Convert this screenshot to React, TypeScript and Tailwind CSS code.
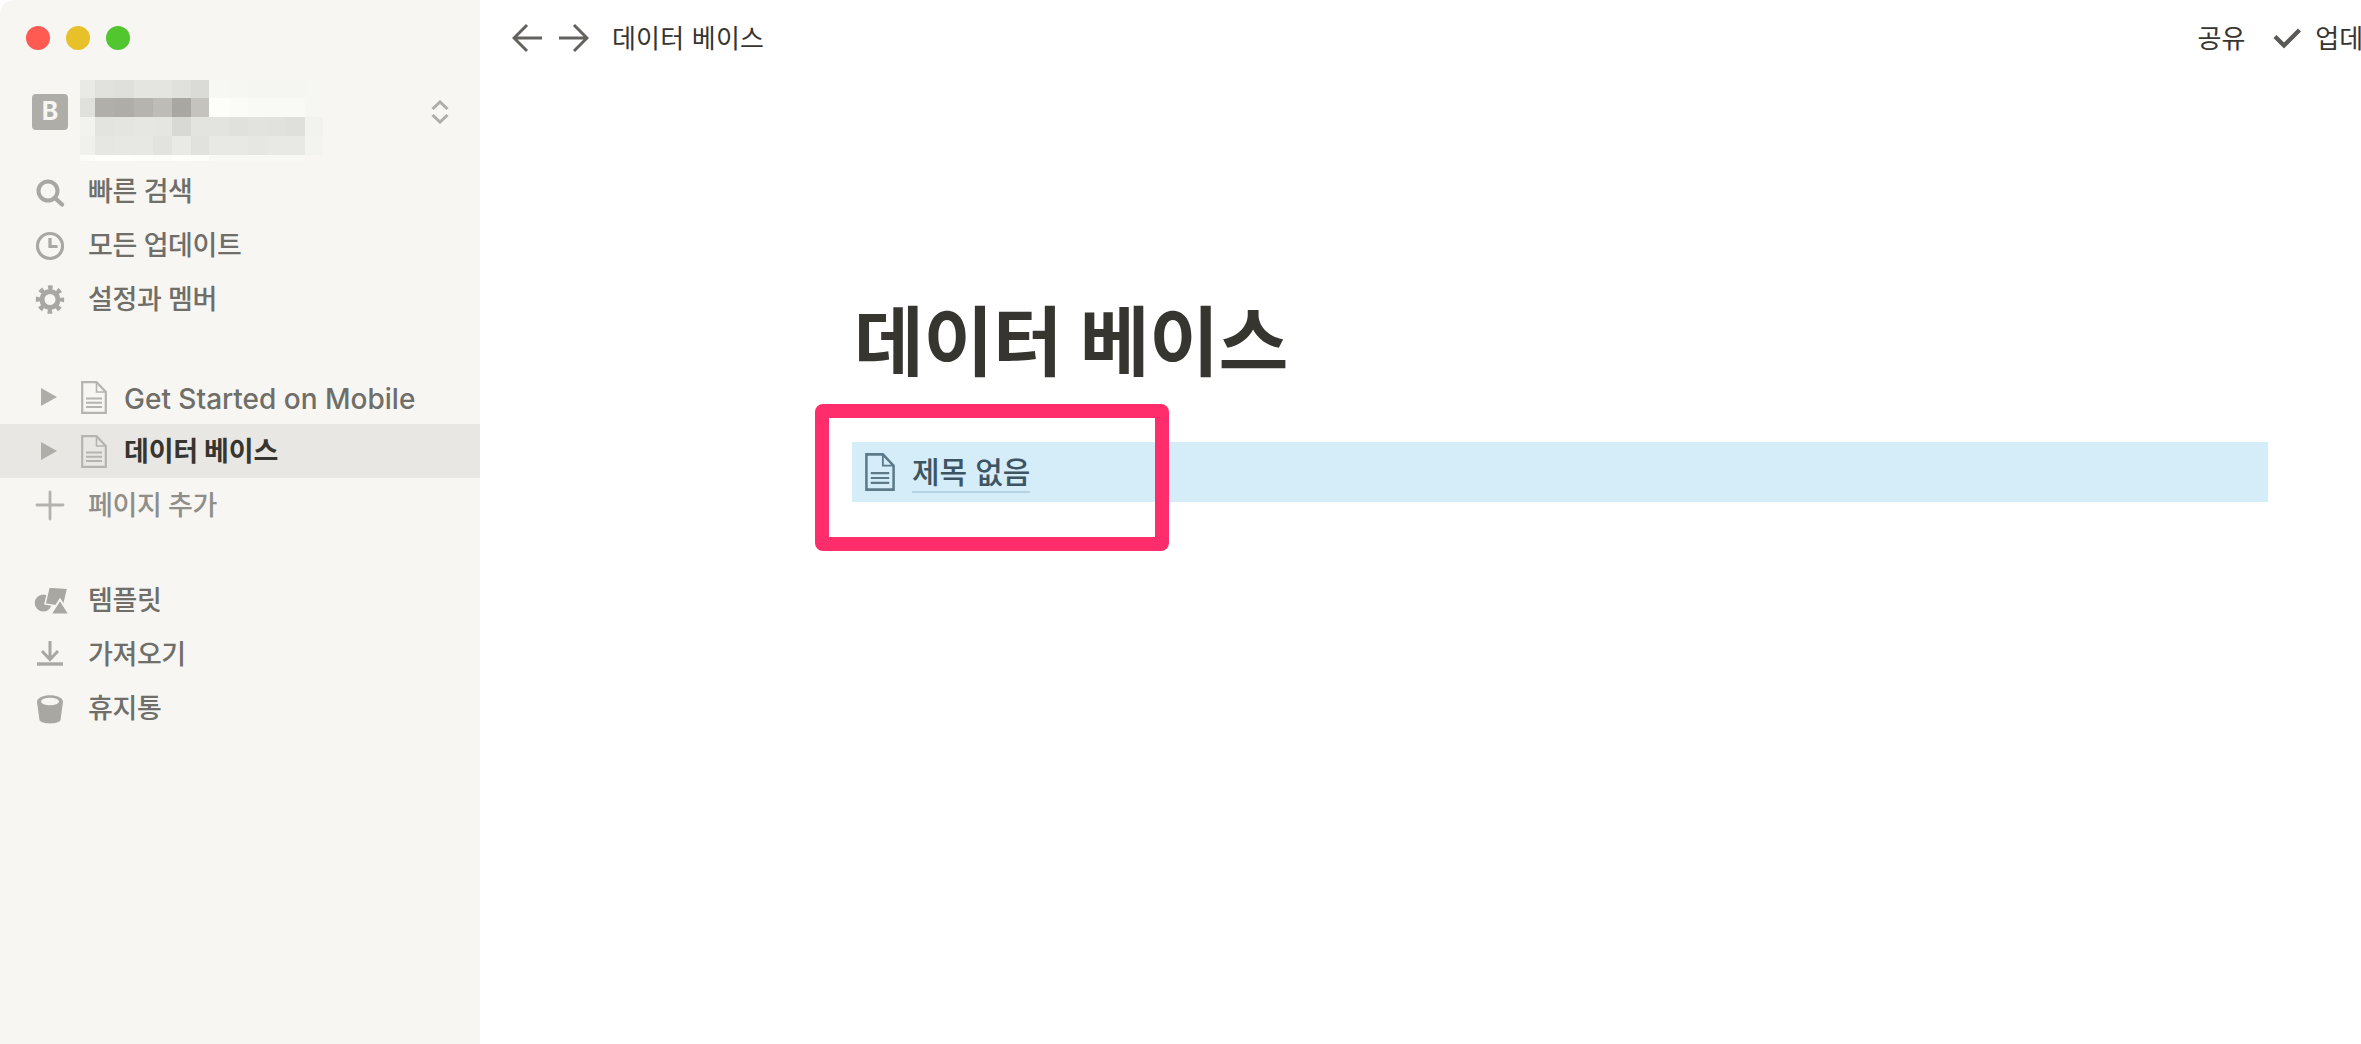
import React from 'react'

const mosaic: { y: number; h: number; cells: string[] }[] = [
  { y: 0, h: 18, cells: ['#e9e9e6', '#e1e1de', '#dfdfdb', '#e4e4e1', '#e4e4e1', '#e0e0dd', '#dadad6', '#f7f7f4', '#f6f6f3', '#f5f5f2', '#f5f5f2', '#f5f5f2', '#f6f6f3', '#f7f6f3'] },
  { y: 18, h: 19, cells: ['#e0e0dc', '#b0afaa', '#aeada8', '#b5b4af', '#bdbcb7', '#a8a7a2', '#c4c3be', '#fdfdf9', '#fbfbf8', '#f9f9f6', '#f9f9f6', '#f9f9f6', '#f6f6f3', '#f7f6f3'] },
  { y: 37, h: 19, cells: ['#f2f2ef', '#e3e3e0', '#e4e4e1', '#e6e6e3', '#e5e5e2', '#d8d8d4', '#e3e3e0', '#e3e3e0', '#e0e0dd', '#e2e2df', '#e1e1de', '#dfdfdb', '#f2f2ef', '#f7f6f3'] },
  { y: 56, h: 19, cells: ['#f0f0ed', '#e6e6e3', '#e7e7e4', '#e7e7e4', '#e2e2df', '#e9e9e6', '#e1e1de', '#e8e8e5', '#e8e8e5', '#e6e6e3', '#e8e8e5', '#e8e8e5', '#f3f3f0', '#f7f6f3'] },
  { y: 75, h: 6, cells: ['#fbfbf8', '#fefefb', '#fefefb', '#fdfdfa', '#fcfcf9', '#fefefb', '#fdfdfa', '#f8f8f5', '#f8f8f5', '#f8f8f5', '#f8f8f5', '#f8f8f5', '#f7f6f3', '#f7f6f3'] },
]
const mosaicX = [0, 15, 34, 54, 73, 92, 111, 129, 149, 168, 187, 206, 225, 243, 258]

const Mosaic = () => (
  <svg width="258" height="81" viewBox="0 0 258 81" className="block shrink-0">
    {mosaic.map((row) =>
      row.cells.map((c, i) => (
        <rect key={`${row.y}-${i}`} x={mosaicX[i]} y={row.y} width={mosaicX[i + 1] - mosaicX[i]} height={row.h} fill={c} />
      )),
    )}
  </svg>
)

const SearchIcon = () => (
  <svg width="36" height="36" viewBox="0 0 36 36" fill="none" stroke="#a8a7a2">
    <circle cx="16" cy="18" r="9.5" strokeWidth="4" />
    <path d="M23 25l7 6.5" strokeWidth="4.4" strokeLinecap="round" />
  </svg>
)

const ClockIcon = () => (
  <svg width="36" height="36" viewBox="0 0 36 36" fill="none" stroke="#a8a7a2">
    <circle cx="18" cy="19" r="12.5" strokeWidth="3.2" />
    <path d="M18 11v8.5h7.5" strokeWidth="3.2" />
  </svg>
)

const GearIcon = () => (
  <svg width="36" height="36" viewBox="0 0 36 36" fill="none" stroke="#a8a7a2">
    <circle cx="18" cy="18.5" r="12" strokeWidth="4.4" strokeDasharray="4.6 4.82" strokeDashoffset="2.3" />
    <circle cx="18" cy="18.5" r="8" strokeWidth="5" />
  </svg>
)

const PlusIcon = () => (
  <svg width="36" height="36" viewBox="0 0 36 36" fill="none" stroke="#b3b2ad" strokeWidth="2.8" strokeLinecap="round">
    <path d="M18 5v27M5 18h26" />
  </svg>
)

const TemplateIcon = () => (
  <svg width="36" height="36" viewBox="0 0 36 36">
    <circle cx="11.3" cy="21" r="8.6" fill="#a8a7a2" />
    <path d="M17 5l18.7 1.3L31.3 25 13 22z" fill="#a8a7a2" stroke="#f7f6f3" strokeWidth="1.5" />
    <path d="M28 17.5l9.5 15H18.5z" fill="#a8a7a2" stroke="#f7f6f3" strokeWidth="2" />
  </svg>
)

const ImportIcon = () => (
  <svg width="36" height="36" viewBox="0 0 36 36" fill="none" stroke="#a8a7a2">
    <path d="M18 5v18M10 15l8 8.5 8-8.5" strokeWidth="3" />
    <path d="M5 28h26" strokeWidth="3.4" />
  </svg>
)

const TrashIcon = () => (
  <svg width="36" height="36" viewBox="0 0 36 36">
    <path d="M5 12C5 3 31 3 31 12L28.5 30C27.5 34.5 8.5 34.5 7.5 30Z" fill="#a8a7a2" />
    <ellipse cx="18" cy="11.5" rx="9" ry="3.8" fill="#f7f6f3" />
  </svg>
)

const PageIcon = ({ color = '#b5b4af', className = 'w-[26px] h-[33px]' }: { color?: string; className?: string }) => (
  <svg viewBox="0 0 26 33" fill="none" stroke={color} strokeWidth="2.2" className={className}>
    <path d="M1.2 1.2H15.5L24.8 11V31.8H1.2Z" />
    <path d="M15.5 1.2V11H24.8" strokeWidth="1.6" />
    <path d="M5 17.5h16M5 21.7h16M5 26h16" strokeWidth="1.9" />
  </svg>
)

const Caret = () => (
  <svg width="16" height="18" viewBox="0 0 16 18" fill="#aeada8">
    <path d="M0 0l16 9-16 9z" />
  </svg>
)

const NavRow = ({ icon, label, muted }: { icon: React.ReactNode; label: string; muted?: boolean }) => (
  <div className="flex h-[54px] items-center gap-5 pl-8">
    {icon}
    <span className={`pt-[3px] text-[27px] font-medium tracking-[-0.4px] ${muted ? 'text-[#8f8e89]' : 'text-[#6f6e69]'}`}>{label}</span>
  </div>
)

const PageRow = ({ label, active }: { label: string; active?: boolean }) => (
  <div className={`flex h-[54px] items-center pl-[41px] ${active ? 'bg-[#e8e7e3]' : ''}`}>
    <Caret />
    <span className="ml-6">
      <PageIcon />
    </span>
    <span
      className={`ml-[17px] pt-[3px] ${active ? 'text-[27px] font-bold tracking-[-0.2px] text-[#37352f]' : 'text-[28px] font-medium text-[#6f6e69]'}`}
    >
      {label}
    </span>
  </div>
)

const App = (): React.ReactElement => {
  return (
    <div className="flex h-screen w-full overflow-hidden bg-white font-['Inter','Noto_Sans_CJK_KR',sans-serif]">
      <aside className="flex w-[480px] shrink-0 flex-col rounded-tl-[14px] bg-[#f7f6f3]">
        <div className="flex h-[76px] items-center gap-4 pl-[26px]">
          <span className="h-6 w-6 rounded-full bg-[#ff5b53]" />
          <span className="h-6 w-6 rounded-full bg-[#e8c029]" />
          <span className="h-6 w-6 rounded-full bg-[#52c62f]" />
        </div>
        <div className="flex h-[72px] items-center pl-8 pr-[31px]">
          <span className="flex h-9 w-9 shrink-0 items-center justify-center rounded-[4px] bg-[#aeada8] font-['Inter'] text-[25px] font-bold text-[#f7f6f3]">
            B
          </span>
          <span className="ml-3 mt-[16px]">
            <Mosaic />
          </span>
          <svg width="18" height="24" viewBox="0 0 18 24" fill="none" stroke="#aeada8" strokeWidth="3" className="ml-auto">
            <path d="M1.5 9L9 2l7.5 7M1.5 15L9 22l7.5-7" />
          </svg>
        </div>
        <div className="mt-4 flex flex-col">
          <NavRow icon={<SearchIcon />} label="빠른 검색" />
          <NavRow icon={<ClockIcon />} label="모든 업데이트" />
          <NavRow icon={<GearIcon />} label="설정과 멤버" />
        </div>
        <div className="mt-11 flex flex-col">
          <PageRow label="Get Started on Mobile" />
          <PageRow label="데이터 베이스" active />
          <NavRow icon={<PlusIcon />} label="페이지 추가" muted />
        </div>
        <div className="mt-[41px] flex flex-col">
          <NavRow icon={<TemplateIcon />} label="템플릿" />
          <NavRow icon={<ImportIcon />} label="가져오기" />
          <NavRow icon={<TrashIcon />} label="휴지통" />
        </div>
      </aside>

      <main className="relative flex min-w-0 flex-1 flex-col">
        <header className="flex h-[76px] shrink-0 items-center justify-between pl-8">
          <div className="flex items-center">
            <svg width="30" height="30" viewBox="0 0 30 30" fill="none" stroke="#63625e" strokeWidth="3">
              <path d="M30 15H3M15 2L2 15l13 13" />
            </svg>
            <svg width="30" height="30" viewBox="0 0 30 30" fill="none" stroke="#63625e" strokeWidth="3" className="ml-[17px]">
              <path d="M0 15h27M15 2l13 13-13 13" />
            </svg>
            <span className="ml-[23px] text-[26px] tracking-[0.2px] text-[#37352f]">데이터 베이스</span>
          </div>
          <div className="mr-[-50px] flex items-center">
            <span className="text-[26px] text-[#37352f]">공유</span>
            <svg width="28" height="22" viewBox="0 0 28 22" fill="none" stroke="#5a5955" strokeWidth="4.4" className="ml-[28px]">
              <path d="M2 9.5l9 9L26.5 3" />
            </svg>
            <span className="ml-[14px] text-[26px] text-[#37352f]">업데이트</span>
          </div>
        </header>

        <div className="ml-[372px] mt-[221px] flex w-[1416px] flex-col">
          <h1 className="ml-[2px] text-[76px] font-bold leading-[90px] tracking-[-0.5px] text-[#37352f]">데이터 베이스</h1>
          <div className="mt-[55px] flex h-[60px] items-center bg-[#d5ecf9] pl-[13px]">
            <PageIcon color="#5d7a8a" className="h-[38px] w-[30px]" />
            <span className="ml-[17px] border-b-2 border-[#b7d2e0] pt-[2px] text-[30px] leading-[37px] font-medium text-[#3d5563]">
              제목 없음
            </span>
          </div>
        </div>

        <div className="absolute left-[335px] top-[404px] h-[147px] w-[354px] rounded-[8px] border-[14px] border-[#ff2d6b]" />
      </main>
    </div>
  )
}

export default App
